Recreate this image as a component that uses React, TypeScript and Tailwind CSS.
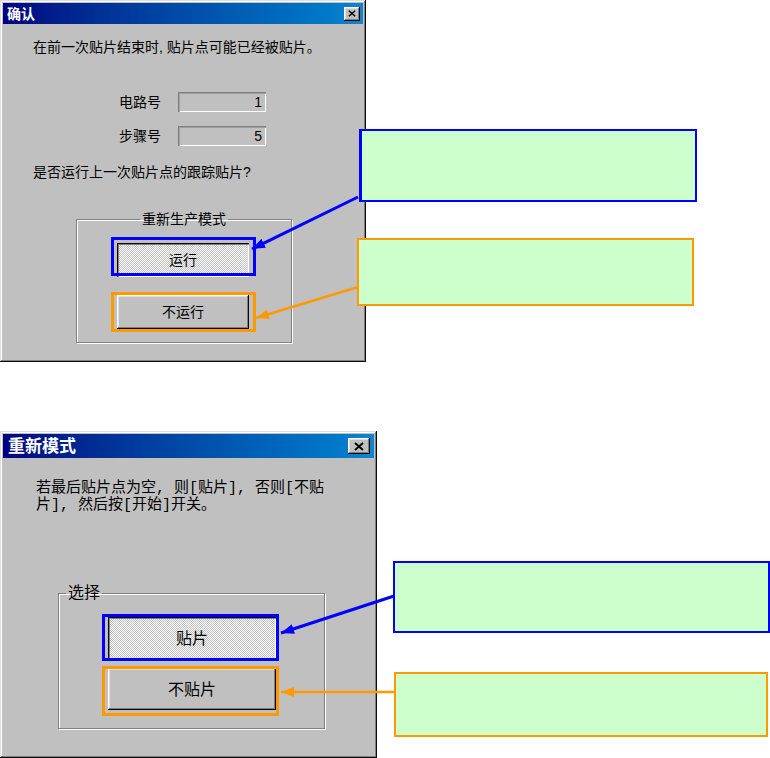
import type { ReactNode } from 'react';

const FONT = "font-['Liberation_Sans','Noto_Sans_CJK_SC',sans-serif]";
const FRAME =
  'bg-[#c0c0c0] p-[3px] shadow-[inset_-1px_-1px_#0a0a0a,inset_1px_1px_#dfdfdf,inset_-2px_-2px_#808080,inset_2px_2px_#ffffff]';
const RAISED =
  'bg-[#c0c0c0] shadow-[inset_-1px_-1px_#0a0a0a,inset_1px_1px_#ffffff,inset_-2px_-2px_#808080,inset_2px_2px_#dfdfdf]';
const PRESSED =
  'bg-[image:repeating-conic-gradient(#c0c0c0_0%_25%,#ffffff_0%_50%)] bg-[length:2px_2px] shadow-[inset_1px_1px_#0a0a0a,inset_2px_2px_#808080,inset_-1px_-1px_#ffffff,inset_-2px_-2px_#dfdfdf]';
const ETCHED = 'border border-[#808080] shadow-[inset_1px_1px_#ffffff,1px_1px_#ffffff]';

function CloseX({ big }: { big?: boolean }) {
  return (
    <div
      className={`${RAISED} flex items-center justify-center ${big ? 'w-[22px] h-[16px]' : 'w-[16px] h-[14px]'}`}
    >
      <svg width={big ? 10 : 8} height={big ? 9 : 7} viewBox="0 0 10 9">
        <path d="M1 1 L9 8 M9 1 L1 8" stroke="#000" strokeWidth="2" fill="none" />
      </svg>
    </div>
  );
}

function Field({ value }: { value: string }) {
  return (
    <div className="w-[88px] h-[20px] flex items-center justify-end pr-[4px] text-[14px] shadow-[inset_1px_1px_#808080,inset_2px_2px_#a0a0a0,inset_-1px_-1px_#ffffff]">
      {value}
    </div>
  );
}

function Btn({
  pressed,
  className,
  ring,
  children,
}: {
  pressed?: boolean;
  className: string;
  ring: string;
  children: ReactNode;
}) {
  return (
    <div className={`relative flex items-center justify-center ${pressed ? PRESSED : RAISED} ${className}`}>
      {children}
      <span className={`absolute ${ring}`} />
    </div>
  );
}

function Arrows() {
  return (
    <svg className="absolute inset-0 z-20 pointer-events-none" width="770" height="758">
      <defs>
        <marker id="hb" markerUnits="userSpaceOnUse" markerWidth="14" markerHeight="10" refX="13" refY="5" orient="auto">
          <path d="M0 0 L13 5 L0 10 z" fill="#0000ff" />
        </marker>
        <marker id="ho" markerUnits="userSpaceOnUse" markerWidth="14" markerHeight="10" refX="13" refY="5" orient="auto">
          <path d="M0 0 L13 5 L0 10 z" fill="#ff9900" />
        </marker>
      </defs>
      <line x1="358" y1="197" x2="252" y2="249" stroke="#0000ff" strokeWidth="3" markerEnd="url(#hb)" />
      <line x1="358" y1="287" x2="256" y2="318" stroke="#ff9900" strokeWidth="2.5" markerEnd="url(#ho)" />
      <line x1="394" y1="596" x2="281" y2="633" stroke="#0000ff" strokeWidth="3" markerEnd="url(#hb)" />
      <line x1="394" y1="692" x2="281" y2="692" stroke="#ff9900" strokeWidth="2.5" markerEnd="url(#ho)" />
    </svg>
  );
}

export default function App() {
  return (
    <div className={`relative w-[770px] h-[758px] overflow-hidden bg-white text-black ${FONT}`}>
      <div className="flex items-start">
        <div className={`${FRAME} w-[366px] h-[362px] shrink-0 flex flex-col`}>
          <div className="h-[21px] flex items-center justify-between pl-[4px] pr-[3px] bg-gradient-to-r from-[#000080] to-[#1084d0]">
            <span className="text-white font-bold text-[14px] leading-none">确认</span>
            <CloseX />
          </div>
          <div className="pl-[30px] text-[14px] leading-[16px]">
            <p className="mt-[15px]">在前一次贴片结束时, 贴片点可能已经被贴片。</p>
            <div className="mt-[37px] flex items-center">
              <span className="ml-[86px] w-[59px]">电路号</span>
              <Field value="1" />
            </div>
            <div className="mt-[14px] flex items-center">
              <span className="ml-[86px] w-[59px]">步骤号</span>
              <Field value="5" />
            </div>
            <p className="mt-[18px]">是否运行上一次贴片点的跟踪贴片?</p>
            <fieldset className={`${ETCHED} mt-[31px] ml-[43px] w-[216px] pb-[13px]`}>
              <legend className="mx-auto px-[2px] leading-[16px]">重新生产模式</legend>
              <Btn
                pressed
                className="mt-[16px] ml-[40px] w-[132px] h-[34px]"
                ring="-left-[6px] -right-[7px] -top-[6px] bottom-[1px] border-[3px] border-[#0000ff]"
              >
                运行
              </Btn>
              <Btn
                className="mt-[18px] ml-[40px] w-[132px] h-[34px]"
                ring="-left-[6px] -right-[7px] -top-[3px] -bottom-[3px] border-[3px] border-[#ff9900]"
              >
                不运行
              </Btn>
            </fieldset>
          </div>
        </div>
        <div className="relative z-10 -ml-[7px] pt-[129px] flex flex-col">
          <div className="w-[338px] h-[73px] bg-[#ccffcc] border-2 border-l-[3px] border-[#0000ff]" />
          <div className="-ml-[2px] mt-[36px] w-[337px] h-[68px] bg-[#ccffcc] border-2 border-[#ff9900]" />
        </div>
      </div>

      <div className="mt-[69px] flex items-start">
        <div className={`${FRAME} w-[377px] h-[327px] shrink-0 flex flex-col`}>
          <div className="h-[24px] flex items-center justify-between pl-[5px] pr-[4px] bg-gradient-to-r from-[#000080] to-[#1084d0]">
            <span className="text-white font-bold text-[17px] leading-none">重新模式</span>
            <CloseX big />
          </div>
          <div className="pl-[33px] text-[16px] leading-[17px]">
            <p className="mt-[22px] text-[15px] font-['Liberation_Mono','Noto_Sans_CJK_SC',monospace]">
              若最后贴片点为空, 则[贴片], 否则[不贴
              <br />
              片], 然后按[开始]开关。
            </p>
            <fieldset className={`${ETCHED} mt-[70px] ml-[22px] w-[267px] pb-[18px]`}>
              <legend className="ml-[7px] px-[2px] leading-[18px]">选择</legend>
              <Btn
                pressed
                className="mt-[15px] ml-[49px] w-[168px] h-[42px]"
                ring="-left-[6px] -right-[3px] -top-[3px] -bottom-[2px] border-[3px] border-[#0000ff]"
              >
                贴片
              </Btn>
              <Btn
                className="mt-[9px] ml-[49px] w-[168px] h-[42px]"
                ring="-left-[6px] -right-[3px] -top-[2px] -bottom-[6px] border-[3px] border-[#ff9900]"
              >
                不贴片
              </Btn>
            </fieldset>
          </div>
        </div>
        <div className="ml-[16px] pt-[130px] flex flex-col">
          <div className="w-[377px] h-[72px] bg-[#ccffcc] border-2 border-[#0000ff]" />
          <div className="ml-[1px] mt-[39px] w-[374px] h-[65px] bg-[#ccffcc] border-2 border-[#ff9900]" />
        </div>
      </div>

      <Arrows />
    </div>
  );
}
